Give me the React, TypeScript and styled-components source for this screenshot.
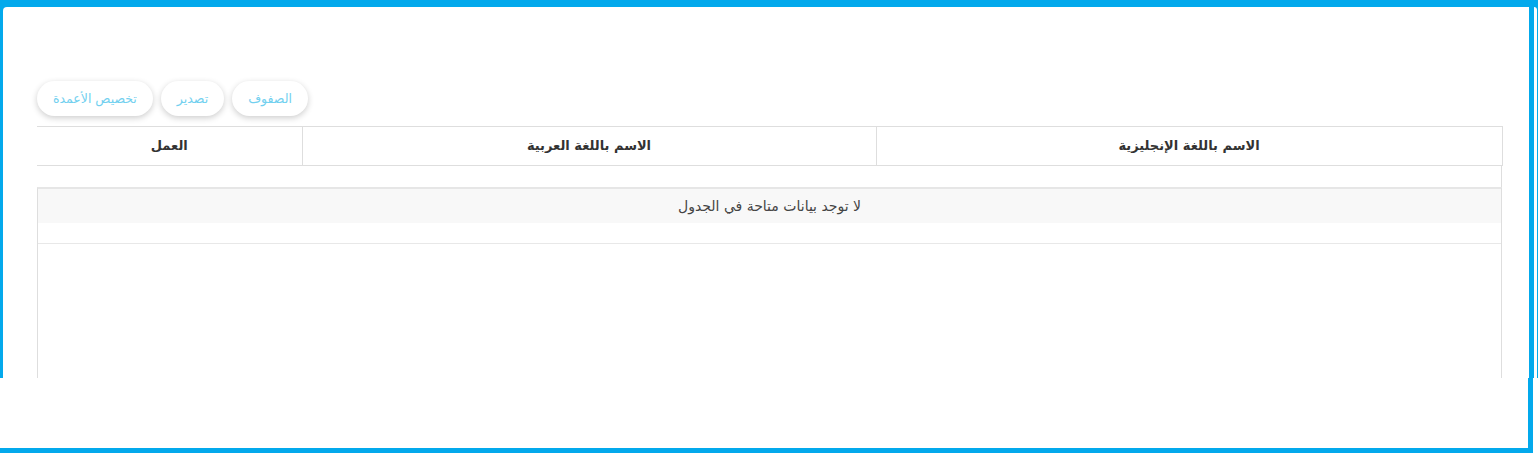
import styled, { createGlobalStyle } from 'styled-components';

const BLUE = '#03a9ec';
const LINE = '#dedede';

const GlobalStyle = createGlobalStyle`
  html, body {
    margin: 0;
    padding: 0;
    background: #fff;
  }
  * {
    box-sizing: border-box;
  }
`;

const columns = ['الاسم باللغة الإنجليزية', 'الاسم باللغة العربية', 'العمل'];
const columnWidths = [626, 574, 265];
const toolbarButtons = ['الصفوف', 'تصدير', 'تخصيص الأعمدة'];

const App = () => {
  return (
    <>
      <GlobalStyle />
      <Page>
        <Viewport>
          <Card>
            <Toolbar>
              {toolbarButtons.map((label) => (
                <ToolButton key={label} type="button">
                  {label}
                </ToolButton>
              ))}
            </Toolbar>

            <HeadTable>
              <colgroup>
                {columnWidths.map((w, i) => (
                  <col key={`col_${i}`} style={{ width: w }} />
                ))}
              </colgroup>
              <thead>
                <tr>
                  {columns.map((title) => (
                    <HeadCell key={title}>{title}</HeadCell>
                  ))}
                </tr>
              </thead>
            </HeadTable>

            <SizingGap />

            <BodyBox>
              <EmptyRow>لا توجد بيانات متاحة في الجدول</EmptyRow>
              <FillerRow />
            </BodyBox>
          </Card>
          <Sliver />
        </Viewport>
        <BottomFrame />
      </Page>
    </>
  );
};
export default App;

const Page = styled.div`
  width: 1538px;
  height: 454px;
  display: flex;
  flex-direction: column;
  background: #fff;
  font-family: 'DejaVu Sans', 'Noto Sans', sans-serif;
`;
const Viewport = styled.div`
  display: flex;
  height: 378px;
  padding: 7px 0 0 3px;
  overflow: hidden;
  background: ${BLUE};
`;
const Card = styled.div`
  flex: 0 0 1525px;
  padding: 74px 26px 0 34px;
  background: #fff;
  border-top-left-radius: 4px;
`;
const Sliver = styled.div`
  flex: 0 0 3px;
  margin-left: 5px;
  background: #fff;
  border-top-right-radius: 3px;
`;
const BottomFrame = styled.div`
  width: 1533px;
  height: 75px;
  background: #fff;
  border-right: 5px solid ${BLUE};
  border-bottom: 5px solid ${BLUE};
`;
const Toolbar = styled.div`
  direction: rtl;
  display: flex;
  justify-content: flex-end;
  gap: 8px;
`;
const ToolButton = styled.button`
  height: 35px;
  padding: 0 16px;
  border: 0;
  border-radius: 18px;
  background: #fff;
  box-shadow: 0 2px 6px rgba(0, 0, 0, 0.2);
  color: #72d0ef;
  font-family: inherit;
  font-size: 12.5px;
  line-height: 33px;
  cursor: pointer;
`;
const HeadTable = styled.table`
  direction: rtl;
  width: 1465px;
  margin-top: 10px;
  table-layout: fixed;
  border-collapse: collapse;
  border-top: 1px solid ${LINE};
  border-bottom: 1px solid ${LINE};
`;
const HeadCell = styled.th`
  height: 39px;
  padding: 0 10px 2px;
  border-right: 1px solid ${LINE};
  color: #333;
  font-size: 13px;
  font-weight: 700;
  text-align: center;
`;
const SizingGap = styled.div`
  width: 1465px;
  height: 21px;
  border-right: 1px solid ${LINE};
`;
const BodyBox = styled.div`
  direction: rtl;
  width: 1465px;
  height: 300px;
  border: 1px solid ${LINE};
  border-top: 2px solid #e6e6e6;
`;
const EmptyRow = styled.div`
  display: flex;
  align-items: center;
  justify-content: center;
  height: 34px;
  background: #f8f8f8;
  color: #444;
  font-size: 14px;
`;
const FillerRow = styled.div`
  height: 21px;
  border-bottom: 1px solid #e8e8e8;
`;
